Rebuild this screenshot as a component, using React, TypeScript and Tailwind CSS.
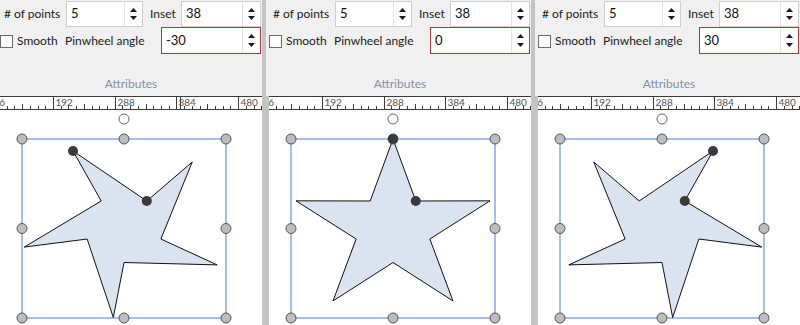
import React from 'react';

type Pt = [number, number];

function starPoints(cx: number, cy: number, rx: number, ry: number, angle: number, inset: number): Pt[] {
  const pts: Pt[] = [];
  for (let i = 0; i < 5; i++) {
    const a = ((angle + i * 72) * Math.PI) / 180;
    pts.push([cx + rx * Math.sin(a), cy - ry * Math.cos(a)]);
    const b = ((36 + i * 72) * Math.PI) / 180;
    pts.push([cx + rx * inset * Math.sin(b), cy - ry * inset * Math.cos(b)]);
  }
  return pts;
}

function Spinner() {
  return (
    <div className="flex h-full w-[18px] shrink-0 flex-col items-center justify-between border-l border-[#e3e3e3] py-[6px]">
      <svg width="7" height="4" viewBox="0 0 7 4">
        <path d="M3.5 0 L7 4 L0 4 Z" fill="#1a1a1a" />
      </svg>
      <svg width="7" height="4" viewBox="0 0 7 4">
        <path d="M0 0 L7 0 L3.5 4 Z" fill="#1a1a1a" />
      </svg>
    </div>
  );
}

function NumberBox({ value, width, red }: { value: string; width: string; red?: boolean }) {
  return (
    <div
      className={`flex h-full shrink-0 items-center bg-white ${width} ${red ? 'border border-[#b8323a]' : 'border border-[#cfcfcf]'}`}
    >
      <span className="flex-1 pl-[4px] text-[13px] text-[#111]">{value}</span>
      <Spinner />
    </div>
  );
}

function Ruler({ cursor }: { cursor?: number }) {
  const step = 61.7 / 8;
  const ticks = Array.from({ length: 36 }, (_, j) => j);
  return (
    <svg width="262" height="14" className="block bg-white">
      <line x1="0" y1="0.5" x2="262" y2="0.5" stroke="#3a3a3a" />
      <line x1="0" y1="13.5" x2="262" y2="13.5" stroke="#3a3a3a" />
      {ticks.map((j) => {
        const x = Math.round(-8.7 + j * step) + 0.5;
        const long = j % 8 === 0;
        const mid = j % 8 === 4;
        return (
          <g key={j}>
            <line x1={x} y1={long ? 0 : mid ? 8 : 10} x2={x} y2="14" stroke="#3a3a3a" />
            {long && (
              <text x={x + 2} y="9.5" fontSize="10" fill="#555" fontFamily="'Lato', sans-serif">
                {96 * (1 + j / 8)}
              </text>
            )}
          </g>
        );
      })}
      {cursor !== undefined && <line x1={cursor + 0.5} y1="0" x2={cursor + 0.5} y2="14" stroke="#3a3a3a" />}
    </svg>
  );
}

function Canvas({ angle }: { angle: number }) {
  const cx = 124;
  const cy = 118.5;
  const pts = starPoints(cx, cy, 102, 89.5, angle, 0.38);
  const handles: Pt[] = [
    [22, 29],
    [124, 29],
    [226, 29],
    [22, 118.5],
    [226, 118.5],
    [22, 208],
    [124, 208],
    [226, 208],
  ];
  return (
    <svg width="262" height="215" className="block bg-white">
      <rect x="22" y="29" width="204" height="179" fill="none" stroke="#a4bef5" strokeWidth="2" />
      <polygon points={pts.map((p) => p.join(',')).join(' ')} fill="#dae3ef" stroke="#111" strokeWidth="1" />
      {handles.map(([x, y], i) => (
        <circle key={i} cx={x} cy={y} r="5" fill="#bdbdbd" stroke="#555" strokeWidth="1" />
      ))}
      <circle cx={124} cy={9} r="5" fill="#fff" stroke="#666" strokeWidth="1" />
      <circle cx={pts[0][0]} cy={pts[0][1]} r="5" fill="#3a3a3a" />
      <circle cx={pts[1][0]} cy={pts[1][1]} r="5" fill="#3a3a3a" />
    </svg>
  );
}

function Panel({ angle, cursor }: { angle: number; cursor?: number }) {
  return (
    <div className="flex w-[262px] shrink-0 flex-col overflow-hidden">
      <div className="flex h-[96px] flex-col bg-[#f0f0f0] text-[12px] text-[#1a1a1a]">
        <div className="-mt-px flex h-[28px] items-center pt-[2px]">
          <span className="w-[66px] shrink-0 pl-[4px]">{'# of points'}</span>
          <NumberBox value="5" width="w-[77px]" />
          <span className="w-[38px] shrink-0 pl-[7px]">Inset</span>
          <NumberBox value="38" width="w-[80px]" />
        </div>
        <div className="flex h-[27px] items-center">
          <span className="mt-[2px] h-[13px] w-[13px] shrink-0 border border-[#6b6b6b] bg-white" />
          <span className="w-[52px] shrink-0 pl-[4px]">Smooth</span>
          <span className="w-[96px] shrink-0">Pinwheel angle</span>
          <NumberBox value={String(angle)} width="w-[100px]" red />
        </div>
        <div className="mt-[22px] text-center leading-[16px] text-[#8391a6]">Attributes</div>
      </div>
      <Ruler cursor={cursor} />
      <Canvas angle={angle} />
    </div>
  );
}

function Divider() {
  return (
    <div className="flex w-[7px] shrink-0 flex-col">
      <div className="flex h-[96px]">
        <div className="w-[4px] bg-[#c4c4c4]" />
        <div className="w-[3px] bg-[#f0f0f0]" />
      </div>
      <div className="flex-1 bg-[#c4c4c4]" />
    </div>
  );
}

export default function App() {
  return (
    <div className="flex h-[325px] w-[800px] overflow-hidden bg-white font-['Lato',sans-serif]">
      <Panel angle={-30} cursor={180} />
      <Divider />
      <Panel angle={0} />
      <Divider />
      <Panel angle={30} />
    </div>
  );
}
